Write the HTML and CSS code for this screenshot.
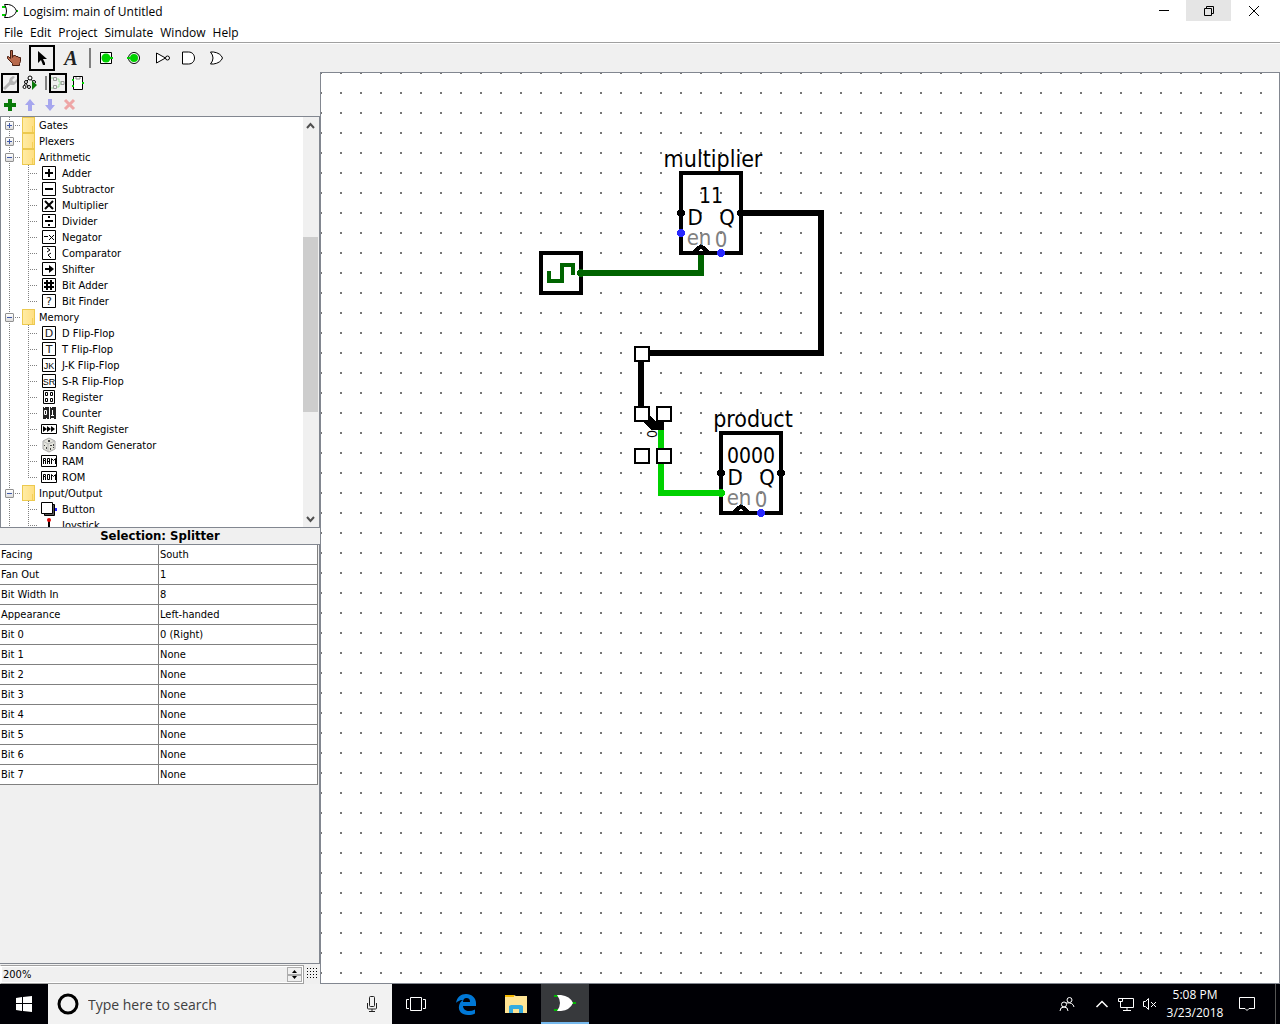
FILE: index.html
```html
<!DOCTYPE html>
<html lang="en">
<head>
<meta charset="utf-8">
<title>Logisim: main of Untitled</title>
<link rel="stylesheet" href="styles.css">
</head>
<body>
<header class="titlebar">
  <svg class="app-icon" width="16" height="16" viewBox="0 0 16 16"><path d="M0 4h4M0 12h4M13 8h3" stroke="#00d200" stroke-width="2"/><path d="M2.500 1.500h4q6 1 8 6.500q-2 5.500-8 6.500h-4q4-6.500 0-13z" fill="#fff" stroke="#000"/></svg>
  <h1 class="window-title">Logisim: main of Untitled</h1>
  <div class="window-controls">
    <button aria-label="Minimize"><svg width="12" height="12"><path d="M1 5.500h10" stroke="#000"/></svg></button>
    <button class="restore" aria-label="Restore"><svg width="12" height="12" fill="none" stroke="#000"><path d="M1.500 3.500h7v7h-7zM3.500 3V1.500h7v7H9"/></svg></button>
    <button aria-label="Close"><svg width="12" height="12"><path d="M1 1l10 10M11 1L1 11" stroke="#000"/></svg></button>
  </div>
</header>
<nav class="menubar">
  <button>File</button><button>Edit</button><button>Project</button><button>Simulate</button><button>Window</button><button>Help</button>
</nav>
<div class="toolbar">
  <button aria-label="Poke tool"><svg width="18" height="18"><path d="M5.500 1.500h2v7l1-2h2l.5 1h2l.5 1h2v4l-1 2v2h-7v-2l-5-5v-2h1l2 2z" fill="#b8694c" stroke="#4a2013"/></svg></button>
  <button class="selected" aria-label="Edit tool"><svg width="18" height="18"><path d="M5 2v12l3-3 2 5h2v-2l-2-4h4z"/></svg></button>
  <button class="text-tool" aria-label="Text tool">A</button>
  <span class="separator"></span>
  <button aria-label="Input pin"><svg width="18" height="18"><path d="M3.500 3.500h11v11h-11z" fill="#fff" stroke="#000"/><circle cx="9" cy="9" r="4.500" fill="#00d200"/><path d="M13 8h3v2h-3z" fill="#00d200"/></svg></button>
  <button aria-label="Output pin"><svg width="18" height="18"><circle cx="9" cy="9" r="5.500" fill="#fff" stroke="#000"/><circle cx="9" cy="9" r="4" fill="#00d200"/><path d="M2 8h3v2H2z" fill="#00d200"/></svg></button>
  <button aria-label="NOT gate"><svg width="18" height="18" fill="#fff" stroke="#000"><path d="M3.500 4v10l9-5z"/><circle cx="14.500" cy="9" r="2"/></svg></button>
  <button aria-label="AND gate"><svg width="18" height="18" fill="#fff" stroke="#000"><path d="M1.500 3v12h6c8 0 8-12 0-12z"/></svg></button>
  <button aria-label="OR gate"><svg width="18" height="18" fill="#fff" stroke="#000"><path d="M1.500 3h3q7 1 9 6q-2 5-9 6h-3q5-6 0-12z"/></svg></button>
</div>
<main class="workspace">
  <aside class="sidebar">
    <div class="explorer-bar">
      <button class="selected" aria-label="Toolbox view"><svg width="14" height="16"><path d="M1 14l7-7" stroke="#b4b4b4" stroke-width="3"/><path d="M10 1L7 3 6 6v3l2 1h3l3-3V4l-3 3-2-2 3-3z" fill="#b4b4b4"/></svg></button>
      <button aria-label="Simulation view"><svg width="16" height="16" fill="none" stroke="#000"><path d="M7 4L4 7 2 11M9 4l3 4M4 8l2 4"/><circle cx="8" cy="3" r="2" fill="#fff"/><circle cx="4" cy="7" r="1.500" fill="#fff"/><circle cx="2.500" cy="12" r="1.500" fill="#fff"/><circle cx="7" cy="12" r="1.500" fill="#fff"/><circle cx="12" cy="7" r="1.500" fill="#fff"/><path d="M10 6v9l5-5z" fill="#087a08" stroke="none"/></svg></button>
      <span class="separator"></span>
      <button class="selected" aria-label="Circuit layout"><svg width="14" height="16" fill="none"><path d="M6 4h2v3h3M6 12h2V9h3M0 3h2M0 13h2" stroke="#9be09b"/><path d="M2.500 2.500h3v3h-3zM2.500 10.500h3v3h-3zM10 6.500h3v3h-3z" stroke="#999"/></svg></button>
      <button aria-label="Circuit appearance"><svg width="16" height="16"><path d="M3.500 1.500h9v13h-9z" fill="#fff" stroke="#000"/><path d="M6 2v2h4V2" fill="none" stroke="#888"/><path d="M2 4h2v2H2zM2 10h2v2H2zM12 7h2v2h-2z" fill="#00d200"/></svg></button>
    </div>
    <div class="edit-bar">
      <button aria-label="Add circuit"><svg width="14" height="14"><path d="M7 1v12M1 7h12" stroke="#087a08" stroke-width="4"/></svg></button>
      <button aria-label="Move up"><svg width="14" height="14"><path d="M7 1l5 6H9v6H5V7H2z" fill="#a6a6ee"/></svg></button>
      <button aria-label="Move down"><svg width="14" height="14"><path d="M7 13l5-6H9V1H5v6H2z" fill="#a6a6ee"/></svg></button>
      <button aria-label="Remove circuit"><svg width="14" height="14"><path d="M2 2l9 9M11 2l-9 9" stroke="#eea6a6" stroke-width="3"/></svg></button>
    </div>
    <div class="tree-pane">
      <ul class="tree">
        <li><div class="folder-row"><button class="twist closed" aria-label="Expand"></button><i class="folder"></i>Gates</div></li>
        <li><div class="folder-row"><button class="twist closed" aria-label="Expand"></button><i class="folder"></i>Plexers</div></li>
        <li><div class="folder-row"><button class="twist" aria-label="Collapse"></button><i class="folder"></i>Arithmetic</div>
          <ul class="tools">
            <li><svg class="tool"><path class="box" d="M1.500 1.500h13v13h-13z"/><path d="M8 4v8M4 8h8" stroke-width="2"/></svg>Adder</li>
            <li><svg class="tool"><path class="box" d="M1.500 1.500h13v13h-13z"/><path d="M4 8h8" stroke-width="2"/></svg>Subtractor</li>
            <li><svg class="tool"><path class="box" d="M1.500 1.500h13v13h-13z"/><path d="M4 4l8 8M12 4l-8 8" stroke-width="2"/></svg>Multiplier</li>
            <li><svg class="tool"><path class="box" d="M1.500 1.500h13v13h-13z"/><path d="M4 8h8M7 4h2M7 12h2" stroke-width="2"/></svg>Divider</li>
            <li><svg class="tool"><path class="box" d="M1.500 1.500h13v13h-13z"/><path d="M3 7.500h4M8 6l5 5M13 6l-5 5"/></svg>Negator</li>
            <li><svg class="tool"><path class="box" d="M1.500 1.500h13v13h-13z"/><path d="M6 3l3 2-3 2M10 8L7 10l3 3"/></svg>Comparator</li>
            <li><svg class="tool"><path class="box" d="M1.500 1.500h13v13h-13z"/><path d="M4 8h6" stroke-width="2"/><path d="M8 4v8l5-4z" fill="#000" stroke="none"/></svg>Shifter</li>
            <li><svg class="tool"><path class="box" d="M1.500 1.500h13v13h-13z"/><path d="M6 3v10M10 3v10M3 6h10M3 10h10" stroke-width="2"/></svg>Bit Adder</li>
            <li><svg class="tool"><path class="box" d="M1.500 1.500h13v13h-13z"/><text x="8" y="12">?</text></svg>Bit Finder</li>
          </ul>
        </li>
        <li><div class="folder-row"><button class="twist" aria-label="Collapse"></button><i class="folder"></i>Memory</div>
          <ul class="tools">
            <li><svg class="tool"><path class="box" d="M1.500 1.500h13v13h-13z"/><text x="8" y="12">D</text></svg>D Flip-Flop</li>
            <li><svg class="tool"><path class="box" d="M1.500 1.500h13v13h-13z"/><text x="8" y="12">T</text></svg>T Flip-Flop</li>
            <li><svg class="tool"><path class="box" d="M1.500 1.500h13v13h-13z"/><text class="pair" x="8" y="12">JK</text></svg>J-K Flip-Flop</li>
            <li><svg class="tool"><path class="box" d="M1.500 1.500h13v13h-13z"/><text class="pair" x="8" y="12">SR</text></svg>S-R Flip-Flop</li>
            <li><svg class="tool"><path class="box" d="M2.500 1.500h11v13h-11z"/><path d="M4.500 3.500h2v3h-2zM9.500 3.500h2v3h-2zM4.500 9.500h2v3h-2zM9.500 9.500h2v3h-2z"/></svg>Register</li>
            <li><svg class="tool"><path d="M2 2h6v12H2zM9 2h6v12H9z" fill="#222" stroke="none"/><path d="M3.500 5.500h2v4h-2zM11.500 5v5M10 10.500h3M3 2.500h1M5 13.500h1M10 13.500h3M10 2.500h1" stroke="#fff"/></svg>Counter</li>
            <li><svg class="tool"><path class="box" d="M.5 3.500h15v9H.5z"/><path d="M2 5v6l4-3zM6 5v6l4-3zM10 5v6l4-3z" fill="#000" stroke="none"/></svg>Shift Register</li>
            <li><svg class="tool"><path d="M2 4l6-3 6 3v8l-6 3-6-3z" fill="#e4e4dc" stroke="#aaa"/><path d="M2 4l5 3v8M7 7l7-3" stroke="#bbb"/><path d="M7 3h2v2H7zM3 8h1v1H3zM5 10h1v2H5zM9 8h2v1H9zM12 7h1v2h-1zM9 11h1v2H9zM12 10h1v1h-1z" fill="#444" stroke="none"/></svg>Random Generator</li>
            <li><svg class="tool"><path class="box" d="M.5 2.500h15v11H.5z"/><path d="M2.500 11V5.500h2v2h-2M4.500 8v3M6.500 11V5.500h2V11M7 8.500h1M10.500 11V5.500l2 2 2-2V11"/></svg>RAM</li>
            <li><svg class="tool"><path class="box" d="M.5 2.500h15v11H.5z"/><path d="M2.500 11V5.500h2v2h-2M4.500 8v3M6.500 5.500h2v5h-2zM10.500 11V5.500l2 2 2-2V11"/></svg>ROM</li>
          </ul>
        </li>
        <li><div class="folder-row"><button class="twist" aria-label="Collapse"></button><i class="folder"></i>Input/Output</div>
          <ul class="tools open-ended">
            <li><svg class="tool"><path d="M3.500 3.500h10v11h-10z" fill="#555"/><path d="M.5 1.500h11v11H.5z" fill="#fff"/><path d="M14 7h2v3h-2z" fill="#22f" stroke="none"/></svg>Button</li>
            <li><svg class="tool"><path d="M8 4v7" stroke-width="2"/><circle cx="8" cy="3" r="2" fill="#d00" stroke="none"/><path d="M2 12l4-2h4l4 2v2H2z" fill="#333" stroke="none"/></svg>Joystick</li>
          </ul>
        </li>
      </ul>
      <div class="scrollbar">
        <button aria-label="Scroll up"><svg width="15" height="16"><path d="M4 10l3.500-4L11 10" fill="none" stroke="#505050" stroke-width="2"/></svg></button>
        <div class="track"><div class="thumb"></div></div>
        <button aria-label="Scroll down"><svg width="15" height="16"><path d="M4 6l3.500 4L11 6" fill="none" stroke="#505050" stroke-width="2"/></svg></button>
      </div>
    </div>
    <section class="attributes">
      <h2>Selection: Splitter</h2>
      <div class="attr-scroll">
        <table>
          <tr><th scope="row">Facing</th><td>South</td></tr>
          <tr><th scope="row">Fan Out</th><td>1</td></tr>
          <tr><th scope="row">Bit Width In</th><td>8</td></tr>
          <tr><th scope="row">Appearance</th><td>Left-handed</td></tr>
          <tr><th scope="row">Bit 0</th><td>0 (Right)</td></tr>
          <tr><th scope="row">Bit 1</th><td>None</td></tr>
          <tr><th scope="row">Bit 2</th><td>None</td></tr>
          <tr><th scope="row">Bit 3</th><td>None</td></tr>
          <tr><th scope="row">Bit 4</th><td>None</td></tr>
          <tr><th scope="row">Bit 5</th><td>None</td></tr>
          <tr><th scope="row">Bit 6</th><td>None</td></tr>
          <tr><th scope="row">Bit 7</th><td>None</td></tr>
        </table>
      </div>
    </section>
    <div class="zoom-bar">
      <div class="spinner">
        <input type="text" value="200%" aria-label="Zoom">
        <div class="steps">
          <button aria-label="Zoom in"><svg width="7" height="4"><path d="M1 4h5L3.500 1z"/></svg></button>
          <button aria-label="Zoom out"><svg width="7" height="4"><path d="M1 0h5L3.500 3z"/></svg></button>
        </div>
      </div>
      <button class="grid-toggle" aria-label="Show grid"></button>
    </div>
  </aside>
  <section class="canvas">
    <svg class="circuit" width="100%" height="100%">
      <defs>
        <pattern id="grid" width="20" height="20" x="320" y="72" patternUnits="userSpaceOnUse"><path d="M0 0h2v2H0z" fill="#777"/></pattern>
      </defs>
      <g transform="translate(-321 -73)">
        <rect x="321" y="73" width="100%" height="100%" fill="url(#grid)"/>
        <g fill="none" stroke-width="6">
          <path d="M741 213h80v140H641v60" stroke="#000"/>
          <path d="M581 273h120v-20" stroke="#006400"/>
          <path d="M661 430v63h60" stroke="#00d200"/>
        </g>
        <g fill="none" stroke="#000" stroke-width="4">
          <rect x="541" y="253" width="40" height="40"/>
          <rect x="681" y="173" width="60" height="80"/>
          <rect x="721" y="433" width="60" height="80"/>
          <path d="M693 253l8-7 8 7M733 513l8-7 8 7"/>
          <path d="M549 271v10h13v-16h11v10" stroke="#006400"/>
        </g>
        <g class="labels">
          <text class="name" x="713" y="167">multiplier</text>
          <text class="value" x="711" y="203">11</text>
          <text x="695" y="225">D</text>
          <text x="727" y="225">Q</text>
          <text class="port" x="699" y="245">en</text>
          <text class="port" x="721" y="247">0</text>
          <text class="name" x="753" y="427">product</text>
          <text class="value" x="751" y="463">0000</text>
          <text x="735" y="485">D</text>
          <text x="767" y="485">Q</text>
          <text class="port" x="739" y="505">en</text>
          <text class="port" x="761" y="507">0</text>
          <text class="fan" transform="translate(657 434) rotate(-90)">0</text>
        </g>
        <path d="M642 420l9 10h13v-9h-9l-8-8z"/>
        <circle cx="681" cy="213" r="4"/><circle cx="741" cy="213" r="4"/>
        <circle cx="721" cy="473" r="4"/><circle cx="781" cy="473" r="4"/>
        <circle cx="581" cy="273" r="4" fill="#006400"/><circle cx="721" cy="493" r="4" fill="#00d200"/>
        <g fill="#2828ff"><circle cx="681" cy="233" r="4"/><circle cx="721" cy="253" r="4"/><circle cx="761" cy="513" r="4"/></g>
        <g fill="#fff" stroke="#000" stroke-width="2">
          <rect x="635" y="347" width="14" height="14"/>
          <rect x="635" y="407" width="14" height="14"/><rect x="657" y="407" width="14" height="14"/>
          <rect x="635" y="449" width="14" height="14"/><rect x="657" y="449" width="14" height="14"/>
        </g>
      </g>
    </svg>
  </section>
</main>
<footer class="taskbar">
  <button class="start" aria-label="Start"><svg width="16" height="16" fill="#fff"><path d="M0 2l6-1v6H0zM7 1l9-1v7H7zM0 8h6v7l-6-1zM7 8h9v8l-9-1z"/></svg></button>
  <div class="search">
    <svg width="22" height="22"><circle cx="11" cy="11" r="9" fill="none" stroke="#000" stroke-width="3"/></svg>
    <input type="text" placeholder="Type here to search" aria-label="Search">
    <svg width="12" height="18" fill="none" stroke="#222"><rect x="3.500" y="1.500" width="5" height="10" rx="1"/><path d="M1.500 8v5q0 1 1 1h7q1 0 1-1V8M6 14v3M3 16.500h6"/></svg>
  </div>
  <div class="apps">
    <button aria-label="Task view"><svg width="20" height="16" fill="none" stroke="#fff"><path d="M4.500 1.500h11v13h-11zM3 3.500H.5v9H3M17 3.500h2.500v9H17"/></svg></button>
    <button aria-label="Microsoft Edge"><svg width="22" height="22"><path d="M1 10C2 4 6 1 11 1c6 0 10 4 10 9v3H8c0 3 3 5 6 5 2 0 4-.5 6-1.500v4C18 21.500 16 22 13 22 7 22 3 18 4 13c.5-3 2-5 4-6C4 7 2 9 1 10zm7-1h7c0-3-1-4-3.500-4S8 7 8 9z" fill="#0078d7"/></svg></button>
    <button aria-label="File Explorer"><svg width="22" height="18"><path d="M0 0h9l2 1h11v17H0z" fill="#ffe494"/><path d="M0 0h9v2H0z" fill="#f5b800"/><path d="M4 18v-7l2-1h10l2 1v7h-4v-4H8v4z" fill="#35ace0"/></svg></button>
    <button class="active" aria-label="Logisim"><svg width="24" height="18"><path d="M1 2h5M1 16h5M19 9h4" stroke="#00b400" stroke-width="2"/><path d="M4 1h4q9 1 12 8q-3 7-12 8H4q6-8 0-16z" fill="#fff"/></svg></button>
  </div>
  <div class="tray">
    <button class="people" aria-label="People"><svg width="16" height="16" fill="none" stroke="#fff"><circle cx="10.500" cy="4" r="2.500"/><circle cx="5" cy="8.500" r="2.500"/><path d="M1 15q0-4 4-4t4 4M7 7q7-1 8 4"/></svg></button>
    <button aria-label="Show hidden icons"><svg width="14" height="10"><path d="M1.500 8L7 2.500 12.500 8" fill="none" stroke="#fff" stroke-width="1.500"/></svg></button>
    <button aria-label="Network"><svg width="18" height="16" fill="none" stroke="#fff"><path d="M5 2.500h11.500v9H3.500V7M1.500 2.500h4v3h-4zM3.500 5v3M10 12v2M6 14.500h8"/></svg></button>
    <button aria-label="Volume"><svg width="16" height="14" fill="none" stroke="#fff"><path d="M1.500 4.500h2l3-3v11l-3-3h-2zM9 5l5 5M14 5l-5 5"/></svg></button>
    <button class="clock">5:08 PM<br>3/23/2018</button>
    <button class="notify" aria-label="Notifications"><svg width="18" height="18" fill="none" stroke="#fff"><path d="M1.500 2.500h15v11H11l-2 2-2-2H1.500z"/></svg></button>
    <button class="desktop" aria-label="Show desktop"></button>
  </div>
</footer>
</body>
</html>
```
FILE: styles.css
```css
* { box-sizing: border-box; }
body {
  margin: 0;
  height: 100vh;
  display: flex;
  flex-direction: column;
  overflow: hidden;
  background: #f0f0f0;
  color: #000;
  font: 12px/16px "Open Sans", "Noto Sans", sans-serif;
}
button {
  margin: 0;
  padding: 0;
  border: 0;
  background: none;
  color: inherit;
  font: inherit;
  display: flex;
  align-items: center;
  justify-content: center;
}
svg { display: block; flex: none; }
ul { list-style: none; margin: 0; padding: 0; }

.titlebar { display: flex; align-items: center; height: 22px; padding: 0 4px 0 2px; background: #fff; flex: none; }
.window-title { flex: 1; margin: 0; padding: 2px 0 0 5px; font-size: 12px; font-weight: 400; }
.window-controls { display: flex; align-self: stretch; }
.window-controls button { width: 45px; height: 21px; }
.window-controls .restore { background: #e5e5e5; }

.menubar { display: flex; gap: 7px; height: 21px; padding: 2px 4px 0; background: #fff; border-bottom: 1px solid #a0a0a0; flex: none; }

.toolbar { display: flex; gap: 2px; align-items: center; height: 29px; padding: 0 1px; border-top: 1px solid #fff; flex: none; }
.toolbar button { width: 26px; height: 26px; }
.toolbar .selected, .explorer-bar .selected { border: 2px solid #000; }
.toolbar .text-tool { padding-left: 2px; font: italic bold 20px/20px "Liberation Serif", serif; color: #222; }
.separator { width: 2px; height: 20px; margin: 0 0 0 4px; background: #808080; }

.workspace { display: flex; flex: 1; min-height: 0; }
.sidebar { display: flex; flex-direction: column; width: 320px; flex: none; font: 11px/16px "DejaVu Sans Condensed", "DejaVu Sans", sans-serif; font-stretch: condensed; }
.explorer-bar { display: flex; gap: 2px; align-items: center; height: 22px; padding: 0 1px; flex: none; }
.explorer-bar button { width: 18px; height: 20px; }
.explorer-bar .separator { height: 14px; }
.edit-bar { display: flex; height: 22px; flex: none; }
.edit-bar button { width: 20px; height: 22px; }

.tree-pane { display: flex; flex: 205 1 0; min-height: 0; border: 1px solid #828790; background: #fff; line-height: 18px; }
.tree { flex: 1; overflow: hidden; background: repeating-linear-gradient(#808080 0 1px, transparent 1px 2px) 8px 0 / 1px 100% no-repeat; }
.folder-row { display: flex; align-items: flex-start; height: 16px; padding-left: 4px; background: repeating-linear-gradient(90deg, #808080 0 1px, transparent 1px 2px) 14px 8px / 6px 1px no-repeat; }
.twist {
  align-self: center;
  width: 9px;
  height: 9px;
  border: 1px solid #919191;
  border-radius: 1px;
  background: linear-gradient(#4059a8, #4059a8) 1px 3px / 5px 1px no-repeat, linear-gradient(#fff, #ddd);
}
.twist.closed { background: linear-gradient(#4059a8, #4059a8) 1px 3px / 5px 1px no-repeat, linear-gradient(#4059a8, #4059a8) 3px 1px / 1px 5px no-repeat, linear-gradient(#fff, #ddd); }
.folder { width: 13px; height: 16px; margin: 0 4px 0 8px; border: 1px solid #ecc94f; background: linear-gradient(#f4cf58, #f4cf58) 9px 8px / 1px 6px no-repeat, linear-gradient(90deg, #ffeca5, #ffdf82); }
.tools li {
  display: flex;
  align-items: flex-start;
  gap: 5px;
  height: 16px;
  padding-left: 40px;
  background:
    repeating-linear-gradient(90deg, #808080 0 1px, transparent 1px 2px) 27px 8px / 10px 1px no-repeat,
    repeating-linear-gradient(#808080 0 1px, transparent 1px 2px) 27px 0 / 1px 100% no-repeat;
}
.tools:not(.open-ended) li:last-child { background-size: 10px 1px, 1px 8px; }
.tool { width: 16px; height: 16px; fill: none; stroke: #000; }
.tool text { font: 11px "DejaVu Sans", sans-serif; fill: #222; stroke: none; text-anchor: middle; }
.tool .pair { font: 9px "Liberation Sans", sans-serif; fill: #000; }
.scrollbar { display: flex; flex-direction: column; width: 16px; background: #f0f0f0; }
.scrollbar button { width: 15px; height: 17px; }
.track { flex: 1; display: flex; flex-direction: column; }
.thumb { margin-top: 103px; height: 175px; width: 15px; background: #cdcdcd; }

.attributes { display: flex; flex-direction: column; flex: 218 1 0; min-height: 0; }
.attributes h2 { margin: 0; font-size: 13px; line-height: 16px; text-align: center; }
.attr-scroll { flex: 1; padding-right: 1px; border: 1px solid #828790; border-width: 1px 1px 1px 0; }
.attributes table { width: 100%; border-spacing: 0; table-layout: fixed; background: #fff; }
.attributes th, .attributes td { height: 20px; padding: 0 0 0 1px; border: 0 solid #808080; border-width: 0 1px 1px 0; font-weight: 400; text-align: left; line-height: 18px; }

.zoom-bar { display: flex; gap: 2px; height: 20px; padding-top: 1px; flex: none; }
.spinner { display: flex; flex: 1; border: 1px solid #a0a0a0; border-left-color: #fff; padding: 1px; background: #fff; }
.spinner input { flex: 1; min-width: 0; padding: 0 1px; border: 0; background: #f0f0f0; font: inherit; color: #000; }
.steps { display: flex; flex-direction: column; width: 15px; }
.steps button { flex: 1; border: 1px solid #acacac; background: #f0f0f0; }
.grid-toggle {
  width: 14px;
  padding: 3px 1px 4px;
  background: conic-gradient(from 270deg at 1px 1px, #000 90deg, transparent 0) 0 0 / 3px 3px content-box;
}

.canvas { flex: 1; min-width: 0; border: 1px solid #828790; background: #fff; }
.circuit { shape-rendering: crispEdges; }
.labels { font: 22px "DejaVu Sans Condensed", "DejaVu Sans", sans-serif; font-stretch: condensed; text-anchor: middle; }
.labels .name { font-size: 23px; }
.labels .value { font-size: 21px; }
.labels .port { fill: #808080; }
.labels .fan { font-size: 14px; }

.taskbar { display: flex; height: 40px; background: #000005; color: #fff; flex: none; }
.start { width: 48px; }
.search { display: flex; align-items: center; gap: 9px; width: 344px; padding: 0 14px 0 9px; background: #f2f2f2; }
.search input { flex: 1; min-width: 0; padding: 2px 0 0; border: 0; background: none; font: 14px/20px "Open Sans", sans-serif; }
.search input::placeholder { color: #404040; opacity: 1; }
.apps { display: flex; gap: 1px; flex: 1; margin-left: -1px; }
.apps button { width: 49px; }
.apps .active { width: 48px; background: #37393c; border-bottom: 2px solid #76b9ed; }
.tray { display: flex; align-items: stretch; }
.tray button { width: 24px; }
.tray .people { width: 46px; }
.tray .clock { width: 66px; line-height: 18px; text-align: center; }
.tray .notify { width: 38px; }
.tray .desktop { width: 5px; margin-left: 9px; border-left: 1px solid #555; }
```
